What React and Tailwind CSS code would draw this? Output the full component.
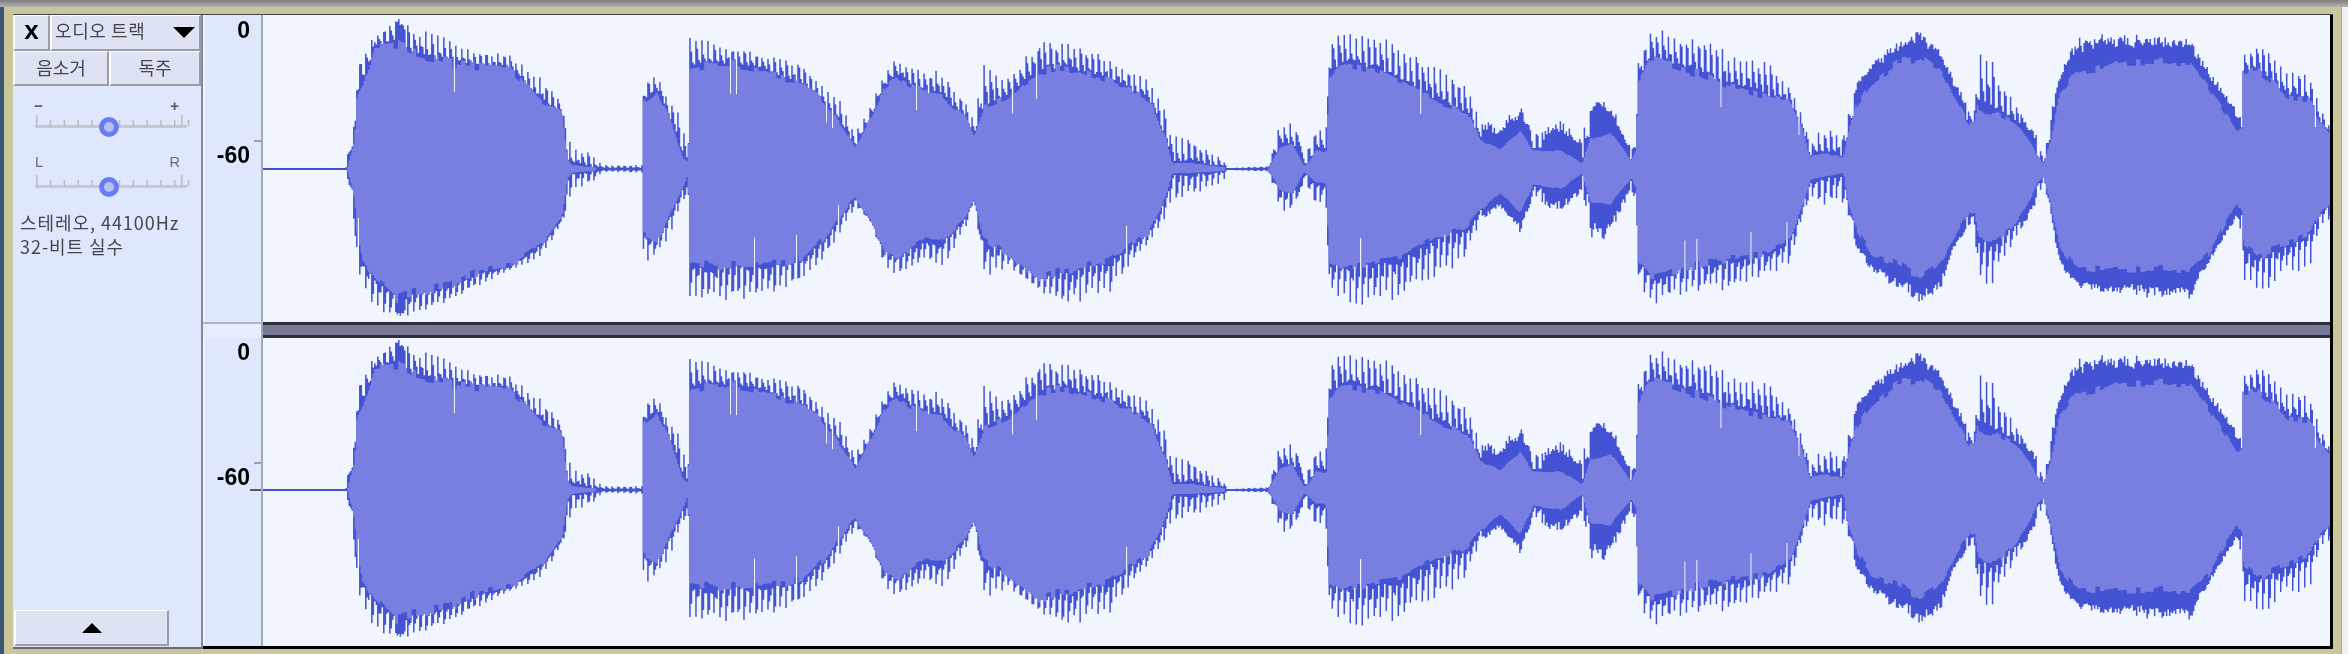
import React from "react";

const E = [
  [264,1,1,1,1],[346,1,1,1,1],[348,20,11,2,2],[355,49,69,30,30],[357,107,108,73,60],[363,120,126,85,90],[375,134,139,122,108],
  [397,149,150,127,128],[417,141,146,114,124],[447,132,133,107,118],[477,119,118,104,104],[510,114,101,102,98],[543,91,88,66,74],
  [562,66,54,56,50],[568,39,41,9,9],[572,20,21,4,4],[590,17,16,2,2],[603,4,3,1,1],[642,4,4,1,1],[643,86,94,66,64],[657,94,89,79,71],
  [668,74,71,56,51],[683,56,34,12,18],[687,19,38,8,8],[689,60,60,30,30],[690,131,134,99,94],[721,126,133,106,98],[762,116,128,99,94],
  [802,106,114,86,91],[823,82,94,69,71],[843,66,61,42,44],[855,36,39,22,28],[872,69,54,54,54],[884,97,96,82,81],[896,111,106,94,88],
  [925,97,94,76,71],[941,102,104,72,74],[966,66,58,52,48],[974,49,31,32,31],[984,114,113,62,71],[1007,92,98,72,84],[1039,127,124,99,108],
  [1068,126,136,101,101],[1109,111,124,89,91],[1149,89,74,69,64],[1166,56,48,29,28],[1172,34,34,6,4],[1190,32,27,6,4],[1223,11,13,2,2],
  [1227,1,1,1,1],[1268,3,3,1,1],[1280,49,44,22,21],[1292,46,41,26,24],[1304,14,13,3,3],[1308,22,22,6,6],[1316,41,38,19,14],[1324,37,33,16,14],
  [1327,54,44,20,20],[1328,126,126,92,91],[1341,136,133,106,98],[1373,134,138,99,94],[1402,124,128,86,88],[1435,104,114,69,68],[1467,84,88,56,58],
  [1480,49,51,29,41],[1500,41,38,20,24],[1520,62,61,38,44],[1533,37,31,18,16],[1561,46,41,18,20],[1582,26,21,6,4],[1584,46,38,12,13],
  [1590,66,68,32,32],[1600,69,68,32,34],[1610,64,61,36,36],[1631,19,21,9,9],[1636,40,40,20,20],[1637,106,109,89,88],[1651,141,138,112,108],
  [1688,134,124,99,98],[1729,119,121,82,91],[1769,106,108,72,84],[1790,82,94,66,71],[1802,54,48,39,38],[1810,29,31,12,11],[1822,41,36,16,8],
  [1843,37,38,12,4],[1847,54,44,32,34],[1855,82,78,62,58],[1871,104,101,86,84],[1896,126,118,106,94],[1920,136,131,111,108],[1940,118,118,99,94],
  [1954,86,78,72,68],[1968,62,58,46,44],[1975,62,60,46,46],[1976,114,118,62,64],[1989,121,124,56,71],[1997,96,98,56,71],[2015,69,74,46,54],
  [2030,42,44,26,31],[2037,29,28,12,14],[2043,12,14,6,8],[2050,52,44,29,34],[2059,94,94,76,78],[2075,126,118,96,98],[2121,134,124,106,101],
  [2189,129,126,106,101],[2208,99,94,82,84],[2236,56,48,39,34],[2241,54,64,39,44],[2242,117,114,96,74],[2258,124,128,99,88],[2287,102,104,72,74],
  [2309,94,101,69,64],[2320,62,58,46,44],[2330,39,54,36,34],
];

const DENSE = [[397,405],[1295,1303],[1484,1530],[1545,1582],[1590,1630],[1855,1965],[2020,2036],[2050,2240]];

function envelope(x) {
  for (let i = 0; i < E.length - 1; i++) {
    const a = E[i];
    const b = E[i + 1];
    if (x >= a[0] && x <= b[0]) {
      const k = (x - a[0]) / (b[0] - a[0] || 1);
      return [1, 2, 3, 4].map((n) => a[n] + (b[n] - a[n]) * k);
    }
  }
  return [1, 1, 1, 1];
}

function makePaths(cy, seed) {
  let s = seed;
  const rnd = () => {
    s = (s * 1664525 + 1013904223) >>> 0;
    return ((s >>> 12) & 0xfffff) / 0xfffff;
  };
  let dark = "";
  let light = "";
  const W = 1.5;
  let outerDrift = 0;
  let innerDrift = 0;
  for (let i = 0; 264 + i * W < 2330; i++) {
    const x = 264 + i * W;
    const [t, b, ti, bi] = envelope(x);
    const dense = DENSE.some((r) => x >= r[0] && x <= r[1]);
    if (i % 3 === 0) {
      outerDrift = (rnd() - 0.5) * 0.22;
      innerDrift = (rnd() - 0.5) * 0.1;
    }
    const shape = (outer, inner) => {
      const r = rnd();
      const gap = outer - inner;
      const big = outer > 45 ? 1 : 0;
      if (dense) {
        const spike = r > 0.88 ? 1.06 : 0.66 + 0.34 * rnd();
        return inner + gap * (spike + outerDrift);
      }
      if (i % 4 === 0) return inner + gap * (0.68 + 0.32 * r);
      if (i % 4 === 1) return inner + gap * (0.28 + 0.5 * r);
      if (i % 4 === 2) return inner + gap * (0.08 + 0.32 * r);
      if (r < 0.05 && big) return inner * 0.72;
      return inner + gap * 0.2 * r;
    };
    const up = Math.max(shape(t, ti), 1);
    const down = Math.max(shape(b, bi), 1);
    const lu = Math.min(ti * (1 + innerDrift), up);
    const ld = Math.min(bi * (1 - innerDrift), down);
    dark += `M${x} ${(cy - up).toFixed(1)}h${W}V${(cy + down).toFixed(1)}h-${W}z`;
    if (lu > 1.5 || ld > 1.5) {
      light += `M${x} ${(cy - lu).toFixed(1)}h${W}V${(cy + ld).toFixed(1)}h-${W}z`;
    }
  }
  return { dark, light };
}

function Wave({ top, height, cy, seed }) {
  const { dark, light } = React.useMemo(() => makePaths(cy, seed), [cy, seed]);
  return (
    <svg
      className="block w-full h-full blur-[0.45px]"
      viewBox={`264 ${top} 2066 ${height}`}
      preserveAspectRatio="none"
    >
      <path d={dark} fill="#4353d3" />
      <path d={light} fill="#797fe0" />
    </svg>
  );
}

function Slider() {
  const ticks = [];
  for (let i = 0; i < 12; i++) ticks.push(23 + i * 13.8);
  return (
    <svg width="188" height="28" className="block">
      <rect x="22" y="11" width="152" height="3" fill="#c6c9cf" />
      {ticks.map((x) => (
        <rect key={x} x={x} y="6" width="1.5" height="6" fill="#b9bcc4" />
      ))}
      <rect x="23" y="1" width="1.5" height="11" fill="#b9bcc4" />
      <rect x="168" y="1" width="1.5" height="11" fill="#b9bcc4" />
      <circle cx="96" cy="13" r="7.5" fill="#b8c2f2" stroke="#6a7cf2" strokeWidth="5" />
    </svg>
  );
}

function Ruler({ mt60, ticks, zeroMt }) {
  return (
    <div className="relative w-[60px] h-full shrink-0 bg-[#dfe7fc] border-l-2 border-l-[#eef2ff] border-r-2 border-r-[#a5a9b3] flex flex-col items-end pr-[11px] font-['Liberation_Sans',sans-serif] font-bold text-[23px] leading-[22px] text-black blur-[0.3px]">
      <div style={{ marginTop: zeroMt }}>0</div>
      <div style={{ marginTop: mt60 }}>-60</div>
      {ticks.map((t) => (
        <div key={t[0]} className="absolute right-0" style={{ top: t[0], width: t[1], height: 2, background: t[2] }} />
      ))}
    </div>
  );
}

const btn = "bg-[#dde3f3] border-t border-l-2 border-t-white border-l-white border-b-2 border-r-2 border-b-[#9a9da6] border-r-[#9a9da6] flex items-center justify-center";

export default function App() {
  return (
    <div className="w-[2348px] h-[654px] flex flex-col overflow-hidden bg-[#f2f3f5] font-['Noto_Sans_CJK_KR','Noto_Sans',sans-serif]">
      <div className="h-[7px] shrink-0 bg-gradient-to-b from-[#7e7e7e] to-[#b4b4b4]" />
      <div className="flex-1 flex min-h-0">
        <div className="w-[4px] bg-[#3a5876] shrink-0" />
        <div className="w-[2337px] shrink-0 bg-[#c9c79a] pl-[9px] pr-[8px] pt-[7px] pb-[5px] flex flex-col">
          <div className="flex-1 flex flex-col border-t border-t-[#44464f] min-h-0">
            <div className="flex-1 flex min-h-0">
              <div className="w-[190px] shrink-0 flex flex-col bg-[#dfe7fc] border-r-2 border-r-[#858997] border-b-2 border-b-[#666873] text-[#45474d] blur-[0.3px]">
                <div className="flex h-[36px] shrink-0">
                  <div className={`${btn} w-[37px] font-['Liberation_Sans',sans-serif] font-bold text-[26px] leading-none text-black pb-[5px]`}>x</div>
                  <div className={`${btn} flex-1 justify-between! pl-[3px] pr-[4px]`}>
                    <span className="text-[18px] leading-none tracking-[0.6px] pb-[5px]">오디오 트랙</span>
                    <svg width="22" height="11" viewBox="0 0 22 11" className="block">
                      <path d="M0 0H22L11 11Z" fill="#000" />
                    </svg>
                  </div>
                </div>
                <div className="flex h-[35px] shrink-0">
                  <div className={`${btn} w-[96px] text-[18px] leading-none pb-[3px]`}>음소거</div>
                  <div className={`${btn} flex-1 text-[18px] leading-none pb-[3px]`}>독주</div>
                </div>
                <div className="flex justify-between pl-[21px] pr-[22px] h-[28px] items-center pt-[11px] font-['Liberation_Sans',sans-serif] text-[15px] font-bold leading-none text-[#55575d]">
                  <span>−</span>
                  <span>+</span>
                </div>
                <Slider />
                <div className="flex justify-between pl-[22px] pr-[21px] h-[32px] items-center pt-[8px] font-['Liberation_Sans',sans-serif] text-[14.5px] leading-none text-[#6a6d74]">
                  <span>L</span>
                  <span>R</span>
                </div>
                <Slider />
                <div className="pl-[7px] pt-[8px] text-[18px] leading-[24px] tracking-[0.95px]">
                  <div>스테레오, 44100Hz</div>
                  <div>32-비트 실수</div>
                </div>
                <div className={`${btn} mt-auto w-[155px] h-[36px] ml-[1px] mb-[1px] shrink-0`}>
                  <svg width="20" height="10" viewBox="0 0 20 10" className="block">
                    <path d="M10 0L20 10H0Z" fill="#000" />
                  </svg>
                </div>
              </div>
              <div className="flex-1 flex flex-col min-w-0 border-r-[3px] border-r-black border-b-[3px] border-b-black">
                <div className="h-[307px] flex shrink-0">
                  <Ruler zeroMt={4} mt60={103} ticks={[[125, 7, "#a0a2a8"]]} />
                  <div className="flex-1 min-w-0 bg-[#f1f5fe]">
                    <Wave top={15} height={307} cy={169} seed={12345} />
                  </div>
                </div>
                <div className="h-[16px] flex shrink-0">
                  <div className="w-[60px] bg-[#e8eeff] border-t-2 border-t-[#b3b6bd] border-r-2 border-r-[#a5a9b3] shrink-0" />
                  <div className="flex-1 bg-[#767a96] border-t-[3px] border-t-[#2b2d3a] border-b-[3px] border-b-[#2b2d3a]" />
                </div>
                <div className="flex-1 flex min-h-0">
                  <Ruler zeroMt={3} mt60={103} ticks={[[124, 7, "#a0a2a8"], [151, 11, "#55575d"]]} />
                  <div className="flex-1 min-w-0 bg-[#f1f5fe]">
                    <Wave top={338} height={308} cy={490} seed={12345} />
                  </div>
                </div>
              </div>
            </div>
          </div>
        </div>
        <div className="flex-1 bg-[#eef0f3] border-l border-l-[#a9a9a9]" />
      </div>
    </div>
  );
}
